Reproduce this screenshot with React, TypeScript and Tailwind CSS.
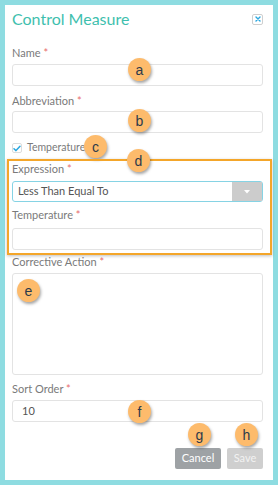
import React from 'react';

const font = { fontFamily: 'Lato, "Open Sans", sans-serif' };

function Badge({ letter, className }: { letter: string; className: string }) {
    return (
        <span
            className={`absolute flex h-[23px] w-[23px] items-center justify-center rounded-full bg-[#fdbb6c] text-[14px] leading-none text-[#2d3a4a] shadow-[1px_2px_3px_rgba(0,0,0,0.35)] ${className}`}
            style={{ fontFamily: '"Liberation Sans", Arial, sans-serif' }}
        >
            {letter}
        </span>
    );
}

function Label({ text, className = '' }: { text: string; className?: string }) {
    return (
        <div className={`h-[14px] text-[11px] leading-[14px] text-[#7a7a7a] ${className}`}>
            {text} <span className="text-[#e86c6c]">*</span>
        </div>
    );
}

function TextInput({ value = '', className = '' }: { value?: string; className?: string }) {
    return (
        <div
            className={`flex h-[22px] items-center rounded-[3px] border border-[#e3e3e3] bg-white pl-[9px] text-[11px] text-[#555] ${className}`}
        >
            {value}
        </div>
    );
}

export default function App() {
    return (
        <div className="h-[485px] w-[278px] bg-[#8edce1] p-[5px]" style={font}>
            <div className="relative h-full bg-white pl-[7px] pr-[10px]">
                {/* header */}
                <div className="flex items-center justify-between pt-[4px]">
                    <h1 className="text-[16px] leading-[20px] text-[#3fbfae]">Control Measure</h1>
                    <button className="flex h-[11px] w-[11px] items-center justify-center rounded-[2px] border border-[#cfcfcf] bg-white">
                        <svg width="6" height="6" viewBox="0 0 6 6">
                            <path d="M1 1L5 5M5 1L1 5" stroke="#2aa7df" strokeWidth="1.4" strokeLinecap="round" />
                        </svg>
                    </button>
                </div>

                {/* name */}
                <div className="relative mt-[17px]">
                    <Label text="Name" />
                    <TextInput className="mt-[4px]" />
                    <Badge letter="a" className="left-[116px] top-[12px]" />
                </div>

                {/* abbreviation */}
                <div className="relative mt-[8px]">
                    <Label text="Abbreviation" />
                    <TextInput className="mt-[3px]" />
                    <Badge letter="b" className="left-[116px] top-[15px]" />
                </div>

                {/* temperature checkbox */}
                <div className="relative mt-[8px] flex h-[14px] items-center">
                    <span className="flex h-[10px] w-[10px] items-center justify-center rounded-[2px] border border-[#dcdcdc] bg-white">
                        <svg width="8" height="7" viewBox="0 0 8 7">
                            <path d="M1 3.8L3 5.6L7 1.2" fill="none" stroke="#2aa7df" strokeWidth="1.5" strokeLinecap="round" strokeLinejoin="round" />
                        </svg>
                    </span>
                    <span className="ml-[5px] text-[10.5px] text-[#7a7a7a]">Temperature</span>
                    <Badge letter="c" className="left-[72px] top-[-6px]" />
                </div>

                {/* conditional group */}
                <div className="relative -ml-[5px] -mr-[9px] mt-[4px] border-2 border-[#f4a62a] pb-[3px] pl-[3px] pr-[7px] pt-[1px] shadow-[0_1px_3px_rgba(0,0,0,0.25)]">
                    <Badge letter="d" className="left-[118px] top-[-12px]" />
                    <Label text="Expression" />
                    <div className="mt-[5px] flex h-[21px] items-stretch rounded-[3px] border border-[#86d3e4] bg-white">
                        <div className="flex flex-1 items-center pl-[5px] text-[11px] text-[#555]">Less Than Equal To</div>
                        <div className="flex w-[30px] items-center justify-center bg-[#cccccc]">
                            <svg width="6" height="4" viewBox="0 0 6 4">
                                <path d="M0 0H6L3 3.5Z" fill="#ffffff" />
                            </svg>
                        </div>
                    </div>
                    <Label text="Temperature" className="mt-[6px]" />
                    <TextInput className="mt-[6px] h-[21px]" />
                </div>

                {/* corrective action */}
                <div className="relative">
                    <Label text="Corrective Action" />
                    <div className="mt-[4px] h-[102px] rounded-[3px] border border-[#e3e3e3] bg-white" />
                    <Badge letter="e" className="left-[5px] top-[24px]" />
                </div>

                {/* sort order */}
                <div className="relative mt-[7px]">
                    <Label text="Sort Order" />
                    <TextInput value="10" className="mt-[4px]" />
                    <Badge letter="f" className="left-[116px] top-[18px]" />
                </div>

                {/* footer */}
                <div className="relative mt-[26px] flex justify-end gap-[6px]">
                    <Badge letter="g" className="right-[52px] top-[-25px]" />
                    <Badge letter="h" className="right-[5px] top-[-25px]" />
                    <button className="h-[21px] w-[46px] rounded-[2px] bg-[#9ea2a5] text-[11px] text-white">Cancel</button>
                    <button className="h-[21px] w-[36px] rounded-[2px] bg-[#cfcfcf] text-[11px] text-[#f2f2f2]">Save</button>
                </div>
            </div>
        </div>
    );
}
